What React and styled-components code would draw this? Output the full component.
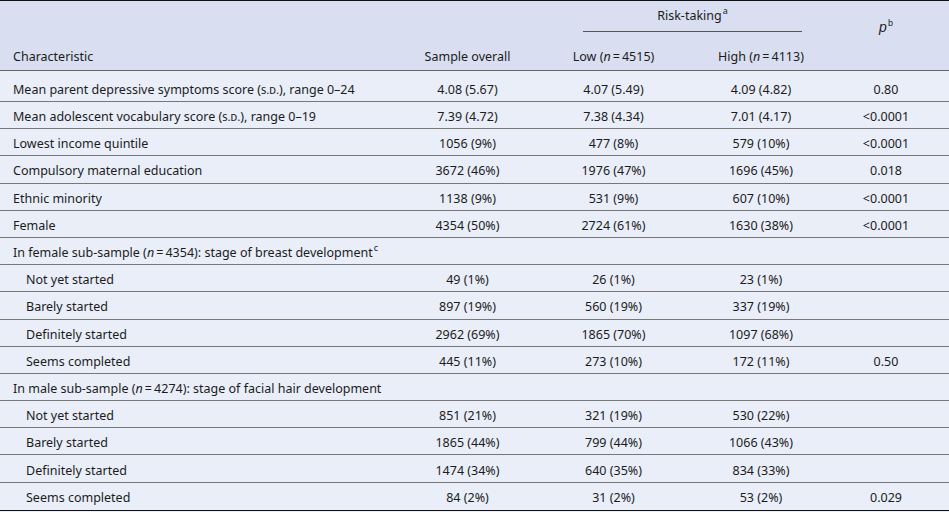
import React from "react";
import styled, { createGlobalStyle } from "styled-components";

const Global = createGlobalStyle`
  *, *::before, *::after { box-sizing: border-box; }
  html, body { margin: 0; padding: 0; background: #e9eef8; }
  body { font-family: "Noto Sans", "Open Sans", sans-serif; color: #1c1c1c; }
`;

const COLS = "395px 145px 147px 148px 1fr";

const Table = styled.div`
  width: 949px;
  background: #e9eef8;
  border-top: 1px solid #111;
  border-bottom: 1.5px solid #111;
  font-size: 12.5px;
`;

const Head = styled.div`
  display: grid;
  grid-template-columns: ${COLS};
  grid-template-rows: 38px 31px;
  height: 70px;
  background: #d9dff0;
  border-bottom: 1px solid #666;
`;

const HeadCell = styled.div`
  grid-column: ${(p) => p.$col};
  grid-row: ${(p) => p.$row};
  display: flex;
  align-items: ${(p) => p.$align || "center"};
  justify-content: ${(p) => (p.$left ? "flex-start" : "center")};
  padding: ${(p) => p.$pad || "3px 0 0"};
  white-space: nowrap;
`;

const Spanner = styled.div`
  grid-column: 3 / 5;
  grid-row: 1;
  display: flex;
  flex-direction: column;
  align-items: center;
  padding: 5px 33px 0 43px;
`;

const SpannerLabel = styled.div`
  line-height: 20px;
`;

const SpannerRule = styled.div`
  align-self: stretch;
  margin-top: 5px;
  border-top: 1px solid #555;
`;

const PLabel = styled.span`
  font-family: "Liberation Sans", Arial, sans-serif;
  font-style: italic;
  font-size: 14px;
`;

const Sup = styled.sup`
  font-size: 9px;
  font-style: normal;
  vertical-align: 6px;
  line-height: 0;
  margin-left: 1px;
`;

const It = styled.i`
  font-style: italic;
`;

const SmallCaps = styled.span`
  font-variant: small-caps;
  font-size: 11.5px;
`;

const Row = styled.div`
  display: grid;
  grid-template-columns: ${COLS};
  height: ${(p) => (p.$first ? "31px" : "27.2px")};
  border-bottom: ${(p) => (p.$last ? "none" : "1px solid #777")};
  align-items: center;
  padding-top: ${(p) => (p.$first ? "7px" : "3px")};
`;

const Label = styled.div`
  padding-left: ${(p) => (p.$indent ? "26px" : "13px")};
  white-space: nowrap;
`;

const Num = styled.div`
  text-align: center;
  white-space: nowrap;
  padding-right: ${(p) => (p.$p ? "12px" : "0")};
`;

const eq = "\u2009=\u2009";

const rows = [
  { label: <>Mean parent depressive symptoms score (<SmallCaps>s.d.</SmallCaps>), range 0–24</>, v: ["4.08 (5.67)", "4.07 (5.49)", "4.09 (4.82)", "0.80"], first: true },
  { label: <>Mean adolescent vocabulary score (<SmallCaps>s.d.</SmallCaps>), range 0–19</>, v: ["7.39 (4.72)", "7.38 (4.34)", "7.01 (4.17)", "<0.0001"] },
  { label: "Lowest income quintile", v: ["1056 (9%)", "477 (8%)", "579 (10%)", "<0.0001"] },
  { label: "Compulsory maternal education", v: ["3672 (46%)", "1976 (47%)", "1696 (45%)", "0.018"] },
  { label: "Ethnic minority", v: ["1138 (9%)", "531 (9%)", "607 (10%)", "<0.0001"] },
  { label: "Female", v: ["4354 (50%)", "2724 (61%)", "1630 (38%)", "<0.0001"] },
  { label: <>In female sub-sample (<It>n</It>{eq}4354): stage of breast development<Sup>c</Sup></>, v: ["", "", "", ""] },
  { label: "Not yet started", indent: true, v: ["49 (1%)", "26 (1%)", "23 (1%)", ""] },
  { label: "Barely started", indent: true, v: ["897 (19%)", "560 (19%)", "337 (19%)", ""] },
  { label: "Definitely started", indent: true, v: ["2962 (69%)", "1865 (70%)", "1097 (68%)", ""] },
  { label: "Seems completed", indent: true, v: ["445 (11%)", "273 (10%)", "172 (11%)", "0.50"] },
  { label: <>In male sub-sample (<It>n</It>{eq}4274): stage of facial hair development</>, v: ["", "", "", ""] },
  { label: "Not yet started", indent: true, v: ["851 (21%)", "321 (19%)", "530 (22%)", ""] },
  { label: "Barely started", indent: true, v: ["1865 (44%)", "799 (44%)", "1066 (43%)", ""] },
  { label: "Definitely started", indent: true, v: ["1474 (34%)", "640 (35%)", "834 (33%)", ""] },
  { label: "Seems completed", indent: true, v: ["84 (2%)", "31 (2%)", "53 (2%)", "0.029"] },
];

export default function App() {
  return (
    <>
      <Global />
      <Table>
        <Head>
          <HeadCell $col={1} $row={2} $left $pad="3px 0 0 13px">Characteristic</HeadCell>
          <HeadCell $col={2} $row={2}>Sample overall</HeadCell>
          <Spanner>
            <SpannerLabel>Risk-taking<Sup>a</Sup></SpannerLabel>
            <SpannerRule />
          </Spanner>
          <HeadCell $col={3} $row={2}>Low (<It>n</It>{eq}4515)</HeadCell>
          <HeadCell $col={4} $row={2}>High (<It>n</It>{eq}4113)</HeadCell>
          <HeadCell $col={5} $row="1 / 3" $align="flex-start" $pad="18px 12px 0 0">
            <PLabel>p<Sup>b</Sup></PLabel>
          </HeadCell>
        </Head>
        {rows.map((r, i) => (
          <Row key={i} $first={r.first} $last={i === rows.length - 1}>
            <Label $indent={r.indent}>{r.label}</Label>
            <Num>{r.v[0]}</Num>
            <Num>{r.v[1]}</Num>
            <Num>{r.v[2]}</Num>
            <Num $p>{r.v[3]}</Num>
          </Row>
        ))}
      </Table>
    </>
  );
}
